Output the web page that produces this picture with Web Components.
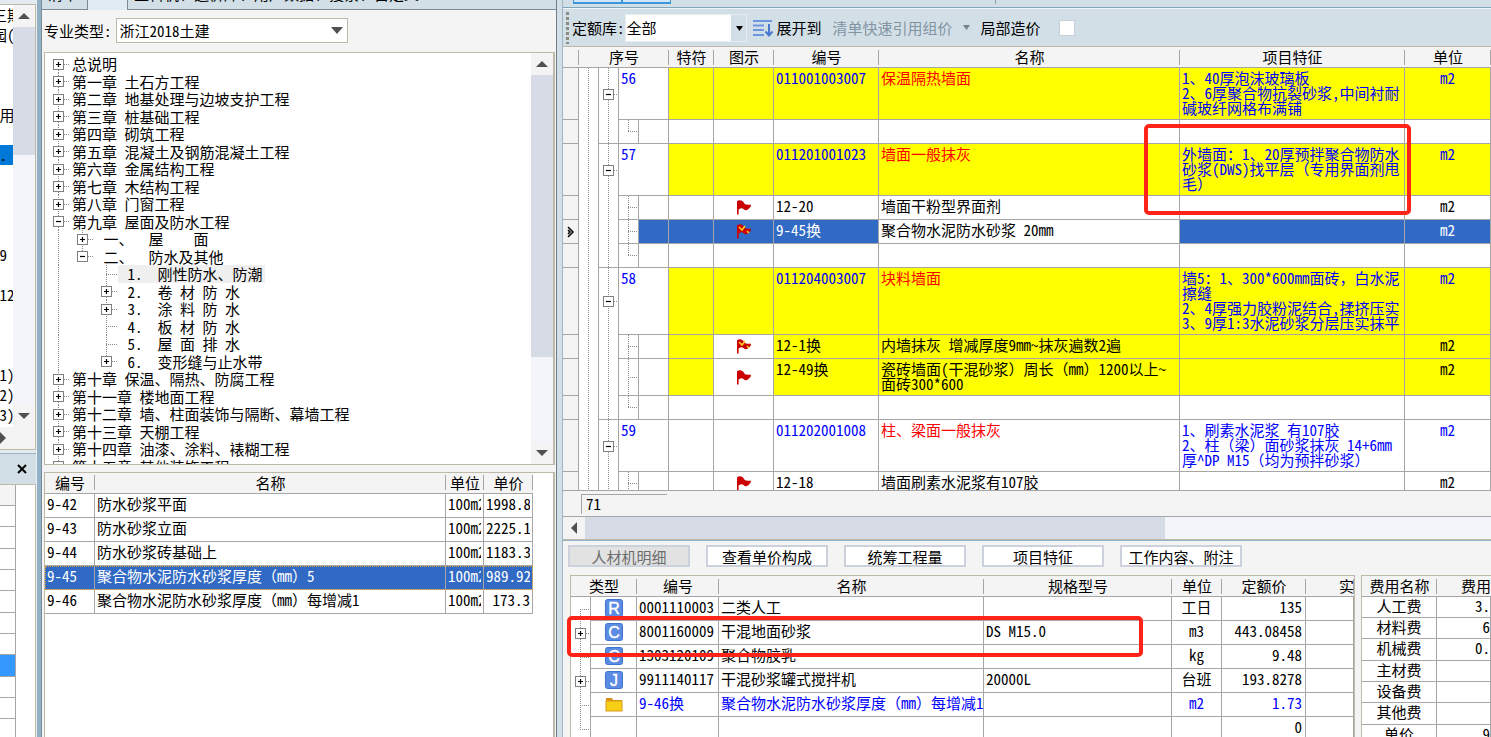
<!DOCTYPE html>
<html lang="zh-CN">
<head>
<meta charset="utf-8">
<title>工程计价</title>
<style>
html,body{margin:0;height:100%;overflow:hidden}
body{font:15px/15px "Noto Sans Mono CJK SC","Noto Sans CJK SC",monospace;text-spacing-trim:space-all;color:#000;background:#d3dfe7;
--line:#a6a6a6;--tan:#bfb9a8;--face:#f4f4f4;--bar:#d3dfe7;--sel:#316ac5;--thumb:#d6dbe5;--track:#f4f5fa}
</style>
</head>
<body>
<app-window></app-window>
<script>
const BASE = `
*{box-sizing:border-box}
:host{display:block;min-width:0;min-height:0;white-space:normal}
button,select,input{font:inherit;color:inherit;margin:0}
table{border-collapse:separate;border-spacing:0;table-layout:fixed;width:100%;background:#fff}
th,td{padding:2px 2px 4px;border:solid var(--line);border-width:0 1px 1px 0;font-weight:400;text-align:left;vertical-align:top;white-space:pre;overflow:hidden}
tr{height:24px}
thead tr{height:21px}
th{background:linear-gradient(var(--line),var(--line)) right 0 center/1px 15px no-repeat var(--face);border-right:0;text-align:center;padding:2px 0 3px;height:21px}
td>div{overflow:hidden}
.c{text-align:center}.r{text-align:right}
.blue{color:#00f}.red{color:#f00}
.plain{border-bottom:0}
`;
const define = (name, html, setup) => {
  const tpl = document.createElement('template');
  customElements.define(name, class extends HTMLElement {
    connectedCallback() {
      if (this.shadowRoot) return;
      tpl.innerHTML = `<style>${BASE}</style>` + (typeof html === 'function' ? html(this) : html);
      this.attachShadow({ mode: 'open' }).append(tpl.content.cloneNode(true));
      if (setup) setup(this);
    }
  });
};

/* expander box of a tree */
define('tree-box', el => `<style>
:host{width:11px;height:11px;flex:none}
svg{display:block}</style>
<svg width="11" height="11" viewBox="0 0 11 11"><rect x=".5" y=".5" width="10" height="10" fill="#fff" stroke="#808080"/><path d="M3 5.5h5${el.hasAttribute('plus') ? 'M5.5 3v5' : ''}" stroke="#000" stroke-width="1.2"/></svg>`);

/* scroll bar, vertical or horizontal; size = thumb share of the track */
define('scroll-bar', el => {
  const h = el.hasAttribute('horizontal');
  const tri = d => `<svg width="12" height="12" viewBox="0 0 12 12"><path d="${d}" fill="#505050"/></svg>`;
  return `<style>
:host{display:flex;flex-direction:${h ? 'row' : 'column'};background:var(--track);flex:none;${h ? 'height' : 'width'}:22px}
button{border:0;padding:0;width:22px;height:22px;background:var(--face);display:flex;align-items:center;justify-content:center;flex:none}
.track{flex:1;min-height:0}
.thumb{background:var(--thumb);${h ? 'height:100%;width' : 'height'}:${el.getAttribute('size')}}
</style><button aria-label="back">${h ? tri('M9 0v12L3 6z') : tri('M0 9h12L6 3z')}</button><div class="track"><div class="thumb"></div></div>${h ? '' : `<button aria-label="forward">${tri('M0 3h12L6 9z')}</button>`}`;
});

define('flag-icon', el => `<style>:host{width:16px;height:15px;margin:auto}svg{display:block}</style>
<svg width="16" height="15" viewBox="0 0 16 15"><path d="M1 1.2C3-.2 5 0 7 1.6L9 4.2c2 .8 4 .4 5.500.2L15 6c-1.500 2-3 4.600-5.500 4.200C7.500 9.800 7 7.800 4.500 8.400L2.600 9.500V14.500H1z" fill="#cb0000"/>${el.hasAttribute('changed') ? '<path d="M3 3l3 3 3-4M11 7l2 2" fill="none" stroke="#ffd21f" stroke-width="1.500"/>' : ''}</svg>`);

define('type-icon', el => {
  const k = el.getAttribute('kind');
  return `<style>:host{width:18px;margin:auto}svg{display:block}</style>` + (k === 'folder'
  ? `<svg width="18" height="18" viewBox="0 0 18 18"><path d="M1 3h6l1 2h9v3H1z" fill="#d98f16"/><rect x="1" y="6" width="16" height="10" fill="#f8cf17" stroke="#d99b1b"/></svg>`
  : `<svg width="18" height="18" viewBox="0 0 18 18"><rect x=".5" y=".5" width="17" height="17" rx="2" fill="#5b8be3" stroke="#3f73cf"/><text x="9" y="15" text-anchor="middle" font-family="Liberation Sans" font-size="16" fill="#fff" stroke="#fff" stroke-width=".4">${k}</text></svg>`);
});

/* strip at the far left: a list and a grid that run out of view */
define('side-strip', `<style>
:host{display:flex;flex-direction:column;width:37px;flex:none;border-right:1px solid #e8eef2;background:#e3ebf0}
.list{flex:445 1 0;min-height:0;margin-top:4px;display:flex;flex-direction:column;border:solid var(--tan);border-width:1px 1px 1px 0;background:var(--face)}
.body{flex:1;display:flex;min-height:0}
ul{margin:0;padding:0;list-style:none;width:13px;overflow:hidden;background:#fff}
li{height:20px;line-height:20px;white-space:pre;text-indent:-8px}
li.on{background:#0078d7}
.h{height:22px;display:flex;align-items:center}
.title{height:31px;margin-top:3px;background:var(--bar);display:flex;align-items:center;justify-content:flex-end;flex:none;padding-right:7px;border-top:1px solid #9fb6c5}
.title button{border:0;background:none;padding:0;width:14px;height:14px}
.title svg,.h svg{display:block}
.grid{flex:253 1 0;min-height:0;overflow:hidden;background:#fff;border:solid var(--tan);border-width:1px 1px 0 0}
table{width:16px}
td{padding:0}
tr{height:21px}tr:nth-child(3n){height:22px}
tr:first-child td{background:var(--face)}
td.on{background:#3399ff}
</style>
<div class="list"><div class="body"><ul></ul><scroll-bar size="34%"></scroll-bar></div><div class="h"><svg width="6" height="12" viewBox="0 0 6 12"><path d="M0 0l6 6-6 6z" fill="#505050"/></svg></div></div>
<div class="title"><button aria-label="关闭"><svg width="14" height="14" viewBox="0 0 14 14"><path d="M3 3l8 8M11 3l-8 8" stroke="#000" stroke-width="2"/></svg></button></div>
<div class="grid"><table><tbody></tbody></table></div>`, el => {
  const rows = ['三期','园(','','','','1用','','*.','','','','','19','',' 12','','','',' 1)',' 2)',' 3)'];
  el.shadowRoot.querySelector('ul').innerHTML = rows.map((t, i) => `<li${i === 7 ? ' class="on"' : ''}>${t}</li>`).join('');
  el.shadowRoot.querySelector('tbody').innerHTML = Array.from({ length: 13 }, (_, i) => `<tr><td${i === 8 ? ' class="on"' : ''}></td></tr>`).join('');
});

define('quota-tabs', `<style>
:host{display:flex;height:10px;overflow:hidden;flex:none;background:var(--bar);align-items:flex-end}
button{border:solid #7d8b96;border-width:0 1px 1px;border-left-width:0;background:var(--bar);height:24px;padding:0 6px 9px;text-align:left;white-space:nowrap}
.cur{width:40px;border:0;border-right:1px solid #7d8b96;background:#e0ebf3}
.rest{flex:1;border-right:0}
.first{width:46px}
</style><button class="first">清单</button><button class="cur" aria-label="定额"></button><button class="rest">主料机、造价库、用户数据、搜索、自定义</button>`);

define('quota-tree', `<style>
:host{display:flex;border:1px solid var(--tan);border-right-width:2px;background:#fff}
ul{flex:1;margin:0;padding:2px 0 0;list-style:none;overflow:hidden}
li{display:flex;height:18px;line-height:17px;white-space:pre}
li:nth-child(even){height:17px}
i{flex:none;width:24px}
i.v{background:repeating-linear-gradient(#8a8a8a 0 1px,transparent 1px 2px) 13px 0/1px 100% no-repeat}
i.half{background-size:1px 50%}
i.start{background-position:13px 9px}
i.node{width:25px;display:flex;align-items:center;padding-left:8px}
i.node::after{content:"";height:1px;flex:1;background:repeating-linear-gradient(90deg,#8a8a8a 0 1px,transparent 1px 2px)}
i.leaf{padding-left:13px}
span{padding:0 2px}
li.on span{background:#efefef}
</style><ul role="tree"></ul><scroll-bar size="77%"></scroll-bar>`, el => {
  const rows = [[0,'+','总说明'],[0,'+','第一章 土石方工程'],[0,'+','第二章 地基处理与边坡支护工程'],[0,'+','第三章 桩基础工程'],[0,'+','第四章 砌筑工程'],[0,'+','第五章 混凝土及钢筋混凝土工程'],[0,'+','第六章 金属结构工程'],[0,'+','第七章 木结构工程'],[0,'+','第八章 门窗工程'],[0,'-','第九章 屋面及防水工程'],[1,'+',' 一、  屋    面'],[1,'-',' 二、  防水及其他'],[2,'',' 1.  刚性防水、防潮'],[2,'+',' 2.  卷 材 防 水'],[2,'+',' 3.  涂 料 防 水'],[2,'',' 4.  板 材 防 水'],[2,'',' 5.  屋 面 排 水'],[2,'+',' 6.  变形缝与止水带'],[0,'+','第十章 保温、隔热、防腐工程'],[0,'+','第十一章 楼地面工程'],[0,'+','第十二章 墙、柱面装饰与隔断、幕墙工程'],[0,'+','第十三章 天棚工程'],[0,'+','第十四章 油漆、涂料、裱糊工程'],[0,'+','第十五章 其他装饰工程']];
  el.shadowRoot.querySelector('ul').innerHTML = rows.map(([lv, s, t], i) => {
    const pre = lv === 0 ? '' : lv === 1 ? '<i class="v"></i>' : '<i class="v"></i><i></i>';
    const last = lv > 0 && (!rows[i + 1] || (lv === 1 ? s === '-' : rows[i + 1][0] < lv));
    return `<li role="treeitem"${i === 12 ? ' class="on"' : ''}>${pre}<i class="v node${last ? ' half' : ''}${i === 0 ? ' start' : ''}${s ? '' : ' leaf'}">${s ? `<tree-box ${s === '+' ? 'plus' : ''}></tree-box>` : ''}</i><span>${t}</span></li>`;
  }).join('');
});

define('quota-list', `<style>
:host{background:#fff;border:solid var(--tan);border-width:1px 2px 0 1px;overflow:hidden}
table{width:488px}
tr.on td{background:var(--sel);color:#fff}
tr.on{outline:1px dotted #d99a3a;outline-offset:-1px}
</style><table><colgroup><col style="width:50px"><col><col style="width:38px"><col style="width:49px"></colgroup>
<thead><tr><th>编号<th>名称<th>单位<th>单价</tr></thead><tbody></tbody></table>`, el => {
  el.shadowRoot.querySelector('tbody').innerHTML = [['9-42','防水砂浆平面','1998.8'],['9-43','防水砂浆立面','2225.1'],['9-44','防水砂浆砖基础上','1183.3'],['9-45','聚合物水泥防水砂浆厚度（mm）5','989.92'],['9-46','聚合物水泥防水砂浆厚度（mm）每增减1','173.3']]
    .map((r, i) => `<tr${i === 3 ? ' class="on"' : ''}><td>${r[0]}</td><td>${r[1]}</td><td><div>100m2</div></td><td class="r"><div>${r[2]}</div></td></tr>`).join('');
});

define('quota-panel', `<style>
:host{display:flex;flex-direction:column;width:520px;flex:none;border-left:4px solid #93b1c6;background:var(--face);border-right:1px solid #6f7c87}
.in{flex:1;min-height:0;display:flex;flex-direction:column;border-left:1px solid #7d8b96}
form{display:flex;align-items:center;height:42px;flex:none;padding:0 0 2px 2px;gap:4px}
.pick{position:relative;width:232px;height:25px}
select{appearance:none;width:100%;height:100%;border:1px solid var(--tan);border-radius:0;background:#fff;padding:0 3px}
.pick svg{position:absolute;right:5px;top:9px;pointer-events:none}
quota-tree{flex:413 1 0;margin:0 1px 7px 2px}
quota-list{flex:266 1 0;margin:0 1px 0 2px}
</style><div class="in"><quota-tabs></quota-tabs>
<form><label for="kind">专业类型:</label><div class="pick"><select id="kind"><option>浙江2018土建</option></select><svg width="12" height="7" viewBox="0 0 12 7"><path d="M0 0h12L6 7z" fill="#505050"/></svg></div></form>
<quota-tree></quota-tree><quota-list></quota-list></div>`);

define('bill-toolbar', `<style>
:host{flex:none;background:var(--bar)}
.up{height:8px;overflow:hidden;display:flex;align-items:flex-start;padding-left:10px;border-bottom:1px solid #7fa6bd}
.up button{width:49px;height:4px;border:solid #3c97dc;border-width:0 1px 2px;background:#cfe6f8;padding:0;flex:none}
.up i{height:4px;border-right:1px solid #8ca4b3;width:325px}
.row{height:38px;display:flex;align-items:center;border-top:1px solid #eef4f8;padding-left:3px}
.grip{width:3px;height:32px;background:repeating-linear-gradient(#8b8b80 0 3px,transparent 3px 5px);margin-right:3px}
.pick{position:relative;width:122px;height:28px;margin-right:5px}
select{appearance:none;width:100%;height:100%;border:1px solid #e6edf2;border-radius:0;padding:0 1px;background:linear-gradient(var(--bar),var(--bar)) right/15px 100% no-repeat #fff}
.pick svg{position:absolute;right:4px;top:12px;pointer-events:none}
.row button{border:0;background:none;padding:0;display:flex;align-items:center;white-space:nowrap}
.row .dim{color:#8094a1;gap:10px;margin:0 11px}
.exp{gap:4px}
label.ck{display:flex;align-items:center;gap:18px}
input{appearance:none;width:16px;height:16px;background:#fff;border:1px solid #c6d0d8}
</style><div class="up"><button aria-label="工具一"></button><button aria-label="工具二"></button><i></i></div>
<div class="row"><span class="grip"></span><label for="lib">定额库:</label><div class="pick"><select id="lib"><option>全部</option></select><svg width="7" height="5" viewBox="0 0 7 5"><path d="M0 0h7L3.500 5z"/></svg></div>
<button class="exp"><svg width="21" height="18" viewBox="0 0 21 18"><path d="M1 2h19M1 6.500h11M1 11h11M1 16h11" stroke="#6c95df" stroke-width="2"/><path d="M17 5v11M13.500 12.500l3.500 4 3.500-4" fill="none" stroke="#4778d0" stroke-width="2"/></svg>展开到</button>
<button class="dim">清单快速引用组价<svg width="7" height="5" viewBox="0 0 7 5"><path d="M0 0h7L3.500 5z" fill="#71838f"/></svg></button>
<label class="ck">局部造价<input type="checkbox"></label></div>`);

define('bill-grid', `<style>
:host{background:#fff;border-top:1px solid var(--tan);overflow:hidden}
.y{background:#ff0}
.on{background:var(--sel);color:#fff}
.ind{background:var(--face)}
.ind,.mid{vertical-align:middle;padding:2px}
.ind svg{display:block;margin:auto}
.guide{background:repeating-linear-gradient(#8a8a8a 0 1px,transparent 1px 2px) 9px 0/1px 100% no-repeat #fff}
td.box{padding:0 0 0 4px;vertical-align:top}
td.box div{display:flex;align-items:center}
td.box div::after{content:"";flex:1;height:1px;background:repeating-linear-gradient(90deg,#8a8a8a 0 1px,transparent 1px 2px)}
td.link{padding:0;background:repeating-linear-gradient(#8a8a8a 0 1px,transparent 1px 2px) 9px 0/1px 100% no-repeat,repeating-linear-gradient(90deg,#8a8a8a 0 1px,transparent 1px 2px) 9px 50%/10px 1px no-repeat}
td.link.last{background-size:1px 50%,10px 1px}
.h52{height:52px}.h67{height:67px}.h37{height:37px}
</style><table><colgroup><col style="width:16px"><col style="width:20px"><col style="width:20px"><col style="width:20px"><col style="width:30px"><col style="width:45px"><col style="width:60px"><col style="width:105px"><col><col style="width:225px"><col style="width:86px"></colgroup>
<thead><tr><th><th colspan="4">序号<th>特符<th>图示<th>编号<th>名称<th>项目特征<th>单位</tr></thead><tbody></tbody></table>`, el => {
  const groups = [
    ['56','011001003007','保温隔热墙面','1、40厚泡沫玻璃板\n2、6厚聚合物抗裂砂浆,中间衬耐\n碱玻纤网格布满铺',52,1,[['']]],
    ['57','011201001023','墙面一般抹灰','外墙面：1、20厚预拌聚合物防水\n砂浆(DWS)找平层（专用界面剂甩\n毛）',52,1,[['12-20','墙面干粉型界面剂',1],['9-45换','聚合物水泥防水砂浆 20mm',2,'on'],['']]],
    ['58','011204003007','块料墙面','墙5：1、300*600mm面砖，白水泥\n擦缝\n2、4厚强力胶粉泥结合,揉挤压实\n3、9厚1:3水泥砂浆分层压实抹平',67,1,[['12-1换','内墙抹灰 增减厚度9mm~抹灰遍数2遍',2,'y'],['12-49换','瓷砖墙面(干混砂浆）周长（mm）1200以上~\n面砖300*600',1,'y',37],['']]],
    ['59','011202001008','柱、梁面一般抹灰','1、刷素水泥浆 有107胶\n2、柱（梁）面砂浆抹灰 14+6mm\n厚^DP M15（均为预拌砂浆）',52,0,[['12-18','墙面刷素水泥浆有107胶',1],['']]]
  ];
  const total = groups.reduce((n, g) => n + 1 + g[6].length, 0);
  let out = '';
  groups.forEach(([no, code, name, feat, h, yellow, kids], gi) => {
    const y = yellow ? 'y' : '';
    out += `<tr class="h${h}"><td class="ind"></td>${gi ? '' : `<td class="guide plain" rowspan="${total}"></td>`}<td class="guide box" rowspan="${kids.length + 1}"><div style="height:${h}px"><tree-box></tree-box></div></td><td colspan="2" class="blue">${no}</td><td class="${y}"></td><td class="${y}"></td><td class="blue ${y}">${code}</td><td class="red ${y}">${name}</td><td class="blue ${y}">${feat}</td><td class="blue c ${y}">m2</td></tr>`;
    kids.forEach(([kc, kn = '', flag, cls = '', kh], i) => {
      const on = cls === 'on';
      out += `<tr${kh ? ` class="h${kh}"` : ''}><td class="ind">${on ? '<svg width="8" height="12" viewBox="0 0 8 12"><path d="M1 1l5 5-5 5M1 4l2 2-2 2" fill="none" stroke="#000" stroke-width="1.500"/></svg>' : ''}</td><td class="link${i === kids.length - 1 ? ' last' : ''}"></td><td class="${on ? cls : ''}"></td><td class="${cls}"></td><td class="mid ${on ? cls : ''}">${flag ? `<flag-icon ${flag === 2 ? 'changed' : ''}></flag-icon>` : ''}</td><td class="${cls}">${kc}</td><td class="${on ? '' : cls}">${kn}</td><td class="${cls}"></td><td class="c ${cls}">${kc ? 'm2' : ''}</td></tr>`;
    });
  });
  el.shadowRoot.querySelector('tbody').innerHTML = out;
});

define('resource-grid', `<style>
:host{background:#fff;border:solid var(--tan);border-width:1px 1px 0 1px;overflow:hidden}
td.ic{padding:2px 0}
td.t{padding:0;border-bottom:0;vertical-align:middle;background:repeating-linear-gradient(#8a8a8a 0 1px,transparent 1px 2px) 9px 0/1px 100% no-repeat,repeating-linear-gradient(90deg,#8a8a8a 0 1px,transparent 1px 2px) 9px 12px/10px 1px no-repeat}
td.t.first{background-position:9px 12px,9px 12px}
td.t.end{background-size:1px 12px,10px 1px}
tree-box{margin-left:4px}
th:last-child{text-align:right}
td:nth-child(7){padding-right:3px}
</style><table><colgroup><col style="width:20px"><col style="width:46px"><col style="width:82px"><col><col style="width:188px"><col style="width:50px"><col style="width:84px"><col style="width:48px"></colgroup>
<thead><tr><th colspan="2">类型<th>编号<th>名称<th>规格型号<th>单位<th>定额价<th>实</tr></thead><tbody></tbody></table>`, el => {
  const rows = [['','R','0001110003','二类人工','','工日','135'],['+','C','8001160009','干混地面砂浆','DS M15.0','m3','443.08458'],['','C','1303120109','聚合物胶乳','','kg','9.48'],['+','J','9911140117','干混砂浆罐式搅拌机','20000L','台班','193.8278'],['','folder','9-46换','聚合物水泥防水砂浆厚度（mm）每增减1','','m2','1.73'],['','','','','','','0']];
  el.shadowRoot.querySelector('tbody').innerHTML = rows.map((r, i) => `<tr${i === 4 ? ' class="blue"' : ''}><td class="t${i ? '' : ' first'}${i === 5 ? ' end' : ''}">${r[0] ? '<tree-box plus></tree-box>' : ''}</td><td class="ic">${r[1] ? `<type-icon kind="${r[1]}"></type-icon>` : ''}</td><td>${r[2]}</td><td>${r[3]}</td><td>${r[4]}</td><td class="c">${r[5]}</td><td class="r">${r[6]}</td><td></td></tr>`).join('');
});

define('fee-grid', `<style>
:host{background:#fff;border:solid var(--tan);border-width:1px 0 0 1px;overflow:hidden}
tbody tr{height:21px}tbody tr:nth-child(3n){height:22px}
td{padding:1px 0 4px}
th:last-child{text-align:right;background:var(--face)}
</style><table><colgroup><col style="width:75px"><col></colgroup><thead><tr><th>费用名称<th>费用</tr></thead><tbody></tbody></table>`, el => {
  el.shadowRoot.querySelector('tbody').innerHTML = [['人工费','3.'],['材料费','6'],['机械费','0.'],['主材费',''],['设备费',''],['其他费',''],['单价','9']].map(r => `<tr><td class="c">${r[0]}</td><td class="r">${r[1]}</td></tr>`).join('');
});

define('detail-panel', `<style>
:host{display:flex;flex-direction:column;background:var(--face);border-top:1px solid #8fb4c9;padding:4px 0 0 5px}
nav{display:flex;gap:16px;flex:none;height:30px}
nav button{width:122px;height:22px;border:2px solid #ccd1de;background:#fff;padding:0;white-space:nowrap}
nav button[disabled]{background:#e2e2e2;color:#6d6d6d}
.tables{flex:1;min-height:0;display:flex;gap:6px;padding-left:2px}
resource-grid{flex:1}
fee-grid{width:130px;flex:none}
</style><nav><button disabled>人材机明细</button><button>查看单价构成</button><button>统筹工程量</button><button>项目特征</button><button>工作内容、附注</button></nav>
<div class="tables"><resource-grid></resource-grid><fee-grid></fee-grid></div>`);

define('bill-panel', `<style>
:host{display:flex;flex-direction:column;flex:1;position:relative;border-left:1px solid #9fb6c5;background:var(--face)}
.top{flex:540 1 0;min-height:0;display:flex;flex-direction:column}
bill-grid{flex:1}
.foot{height:27px;flex:none;border:solid var(--line);border-width:1px 0;padding:3px 0 3px 18px}
.foot output{display:block;width:86px;height:20px;border:solid #a6a6a6;border-width:1px 0 0 1px;padding:1px 4px}
scroll-bar{height:23px;border-bottom:1px solid var(--tan)}
detail-panel{flex:192 1 0}
.mark{position:absolute;border:4px solid #ff2417;border-radius:5px;pointer-events:none}
.feat{right:80px;width:267px;top:124px;height:91px}
.mat{left:4px;right:348px;top:616px;height:41px}
</style><div class="top"><bill-toolbar></bill-toolbar><bill-grid></bill-grid><div class="foot"><output>71</output></div><scroll-bar horizontal size="64%"></scroll-bar></div>
<detail-panel></detail-panel><div class="mark feat"></div><div class="mark mat"></div>`);

define('app-window', `<style>
:host{display:flex;height:100vh;overflow:hidden;background:var(--bar)}
bill-panel{margin-left:5px}
</style><side-strip></side-strip><quota-panel></quota-panel><bill-panel></bill-panel>`);
</script>
</body>
</html>
